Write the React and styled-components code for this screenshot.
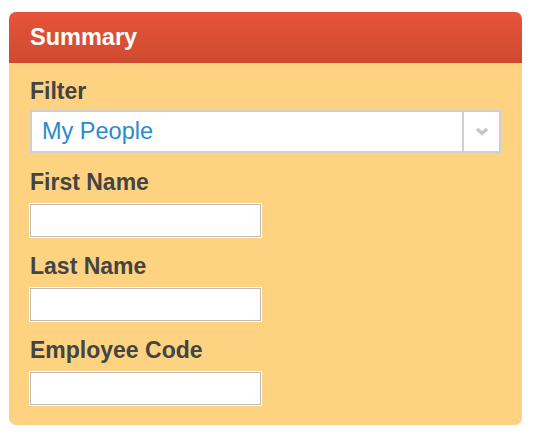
import React from "react";
import styled, { createGlobalStyle } from "styled-components";

const GlobalStyle = createGlobalStyle`
body {
    margin: 0;
    background: #ffffff;
    font-family: "Liberation Sans", Arial, Helvetica, sans-serif;
}
`;

const Page = styled.div`
padding: 12px 0 0 9px;
`;

const Panel = styled.section`
width: 513px;
border-radius: 7px;
overflow: hidden;
background-color: #fdd281;
`;

const PanelHeader = styled.h2`
margin: 0;
height: 51px;
line-height: 51px;
padding: 0 21px;
font-size: 23.5px;
font-weight: bold;
color: #ffffff;
background: linear-gradient(to bottom, #e6533a, #cf4a2f);
`;

const PanelBody = styled.div`
display: flex;
flex-direction: column;
gap: 16px;
padding: 15px 21px 20px;
`;

const Field = styled.div`
display: flex;
flex-direction: column;
align-items: flex-start;
`;

const Label = styled.label`
display: block;
margin-bottom: ${(p) => (p.$tight ? "6px" : "9px")};
font-size: 23px;
line-height: 26px;
font-weight: bold;
color: #444444;
`;

const SelectBox = styled.div`
display: flex;
align-self: stretch;
height: 43px;
box-sizing: border-box;
border: 2px solid #cfcfcf;
background: #ffffff;
cursor: pointer;
`;

const SelectValue = styled.span`
flex: 1;
padding-left: 10px;
font-size: 23.5px;
line-height: 39px;
color: #2a8bc9;
`;

const SelectArrow = styled.span`
display: flex;
align-items: center;
justify-content: center;
width: 35px;
border-left: 2px solid #cfcfcf;
`;

const TextInput = styled.input`
width: 231px;
height: 33px;
box-sizing: border-box;
margin: 0;
border: 1px solid #bcbcbc;
box-shadow: 0 0 0 1px #ffffff;
background: #ffffff;
font-size: 16px;
font-family: inherit;
`;

function Chevron() {
    return (
        <svg width="14" height="9" viewBox="0 0 14 9">
            <polyline points="2,2 7,6.5 12,2" fill="none" stroke="#c6c6c6" strokeWidth="3.5" />
        </svg>
    );
}

const fields = ["First Name", "Last Name", "Employee Code"];

function App() {
    return (
        <Page>
            <GlobalStyle />
            <Panel>
                <PanelHeader>Summary</PanelHeader>
                <PanelBody>
                    <Field>
                        <Label $tight>Filter</Label>
                        <SelectBox>
                            <SelectValue>My People</SelectValue>
                            <SelectArrow>
                                <Chevron />
                            </SelectArrow>
                        </SelectBox>
                    </Field>
                    {fields.map((name) => (
                        <Field key={name}>
                            <Label>{name}</Label>
                            <TextInput type="text" />
                        </Field>
                    ))}
                </PanelBody>
            </Panel>
        </Page>
    );
}

export default App;
